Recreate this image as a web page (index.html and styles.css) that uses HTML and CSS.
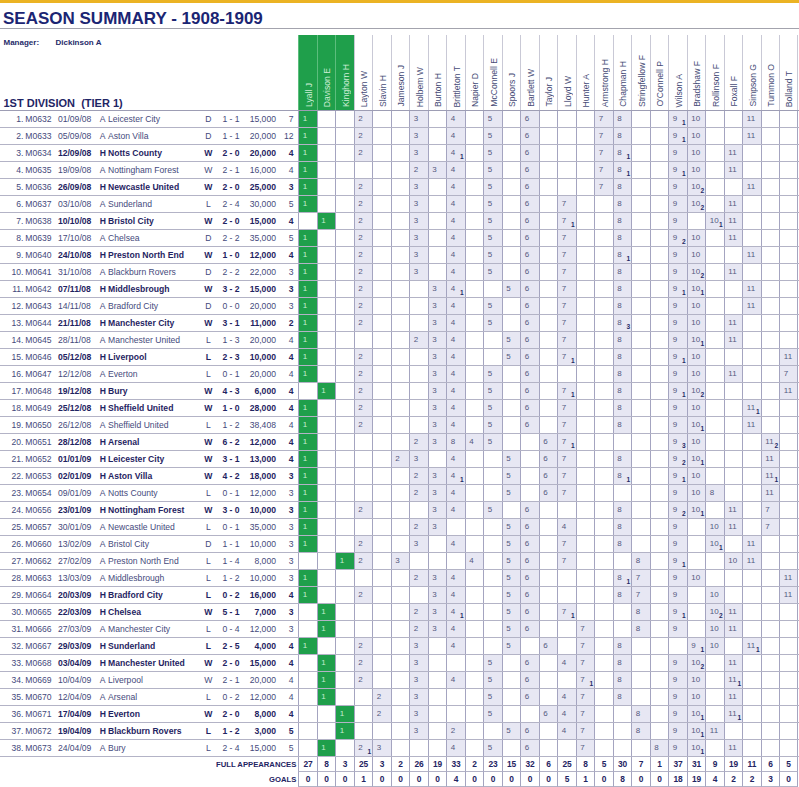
FILE: index.html
```html
<!DOCTYPE html>
<html lang="en">
<head>
<meta charset="utf-8">
<title>Season Summary 1908-1909</title>
<link rel="stylesheet" href="styles.css">
</head>
<body>
<div class="topbar"></div>
<h1 class="title">SEASON SUMMARY - 1908-1909</h1>
<div class="head">
  <div class="headinfo">
    <div class="manager"><span class="mlabel">Manager:</span><span class="mname">Dickinson A</span></div>
    <div class="division">1ST DIVISION  (TIER 1)</div>
  </div>
  <div class="players">
    <div class="hc gkh"><span>Lyall J</span></div>
    <div class="hc gkh"><span>Davison E</span></div>
    <div class="hc gkh"><span>Kinghorn H</span></div>
    <div class="hc"><span>Layton W</span></div>
    <div class="hc"><span>Slavin H</span></div>
    <div class="hc"><span>Jameson J</span></div>
    <div class="hc"><span>Holbem W</span></div>
    <div class="hc"><span>Burton H</span></div>
    <div class="hc"><span>Brittleton T</span></div>
    <div class="hc"><span>Napier D</span></div>
    <div class="hc"><span>McConnell E</span></div>
    <div class="hc"><span>Spoors J</span></div>
    <div class="hc"><span>Bartlett W</span></div>
    <div class="hc"><span>Taylor J</span></div>
    <div class="hc"><span>Lloyd W</span></div>
    <div class="hc"><span>Hunter A</span></div>
    <div class="hc"><span>Armstrong H</span></div>
    <div class="hc"><span>Chapman H</span></div>
    <div class="hc"><span>Stringfellow F</span></div>
    <div class="hc"><span>O'Connell P</span></div>
    <div class="hc"><span>Wilson A</span></div>
    <div class="hc"><span>Bradshaw F</span></div>
    <div class="hc"><span>Rollinson F</span></div>
    <div class="hc"><span>Foxall F</span></div>
    <div class="hc"><span>Simpson G</span></div>
    <div class="hc"><span>Tummon O</span></div>
    <div class="hc"><span>Bolland T</span></div>
  </div>
</div>
<div id="rows" class="rows"></div>
<div id="foot" class="foot"></div>
<script src="script.js"></script>
</body>
</html>
```

FILE: styles.css
```css
html, body {
  margin: 0;
  padding: 0;
  background: #ffffff;
}
body {
  width: 799px;
  font-family: "Liberation Sans", Arial, sans-serif;
  color: #2a2f6b;
  overflow: hidden;
}
.topbar {
  height: 3px;
  background: #ebb323;
}
.title {
  margin: 0;
  box-sizing: border-box;
  height: 26px;
  padding: 6.5px 0 0 3px;
  font-size: 17px;
  line-height: 17px;
  font-weight: bold;
  color: #1b2573;
  border-bottom: 1px solid #a3a3ad;
}
.head {
  display: flex;
  box-sizing: border-box;
  height: 82px;
  border-bottom: 1px solid #9d9db4;
}
.headinfo {
  width: 298.3px;
  flex: none;
  display: flex;
  flex-direction: column;
  justify-content: space-between;
  padding-top: 9px;
  box-sizing: border-box;
}
.manager {
  font-size: 8px;
  line-height: 10px;
  font-weight: bold;
  color: #262b6a;
  padding-left: 3.5px;
  display: flex;
}
.mlabel {
  width: 52px;
}
.division {
  font-size: 11px;
  line-height: 13px;
  font-weight: bold;
  color: #1f2565;
  padding-left: 3.5px;
  white-space: pre;
}
.players {
  display: flex;
  margin-top: 6px;
  height: 75px;
}
.hc {
  width: 18.5px;
  flex: none;
  box-sizing: border-box;
  border-left: 1px solid #c9c9d6;
  display: flex;
  flex-direction: column;
  justify-content: flex-end;
  align-items: center;
  padding: 0 0 3px 1.5px;
  font-size: 8.6px;
  color: #464b76;
}
.hc:last-child {
  border-right: 1px solid #c9c9d6;
}
.hc span {
  writing-mode: vertical-rl;
  transform: rotate(180deg);
  white-space: nowrap;
  line-height: 10px;
}
.hc.gkh {
  background: #1f9f4b;
  color: #cdeed6;
  border-left-color: #5cbd7d;
}
.rows {
  display: flex;
  flex-direction: column;
}
.row {
  display: flex;
  box-sizing: border-box;
  height: 17px;
  border-bottom: 1px solid #b3b3c6;
}
.info {
  width: 298.3px;
  flex: none;
  box-sizing: border-box;
  padding-right: 4.8px;
  display: grid;
  grid-template-columns: 23.5px 34px 41.3px 8.7px 92.5px 16.6px 28.8px 30.6px 17.5px;
  font-size: 8.6px;
  line-height: 16px;
  color: #454a7c;
  white-space: nowrap;
}
.idx { text-align: right; }
.code { padding-left: 1.8px; }
.date { padding-left: 0.4px; }
.ven { padding-left: 1px; }
.team { padding-left: 0.5px; overflow: hidden; }
.res { text-align: center; }
.score { text-align: center; }
.att { text-align: right; }
.pos { text-align: right; }
.home .date, .home .ven, .home .team, .home .res,
.home .score, .home .att, .home .pos {
  font-weight: bold;
  color: #1f2462;
}
.c {
  width: 18.5px;
  flex: none;
  box-sizing: border-box;
  border-left: 1px solid #a4a4c0;
  display: flex;
  justify-content: space-between;
  padding: 0 1.2px 0 3.5px;
  font-size: 8px;
  line-height: 16px;
  color: #545980;
}
.c:last-child {
  border-right: 1px solid #a4a4c0;
}
.c.on {
  background: #e7e7f3;
}
.c.gk {
  background: #1f9f4b;
  color: #c6ecd0;
}
.c b {
  align-self: flex-end;
  font-size: 6.6px;
  line-height: 8px;
  margin-bottom: 0.5px;
  color: #262b66;
}
.foot {
  display: flex;
  flex-direction: column;
}
.frow {
  display: flex;
  height: 15px;
}
.flabel {
  width: 298.3px;
  flex: none;
  box-sizing: border-box;
  padding-right: 2px;
  text-align: right;
  font-size: 7.7px;
  line-height: 15px;
  font-weight: bold;
  color: #1f2462;
}
.fc {
  width: 18.5px;
  flex: none;
  box-sizing: border-box;
  border-left: 1px solid #a4a4c0;
  border-bottom: 1px solid #b3b3c6;
  text-align: center;
  font-size: 8.4px;
  line-height: 14px;
  font-weight: bold;
  color: #1f2462;
}
.fc:last-child {
  border-right: 1px solid #a4a4c0;
}
```

FILE: script.js
```js
var matches = [
  ["M0632","01/09/08","A","Leicester City","D","1 - 1","15,000","7"],
  ["M0633","05/09/08","A","Aston Villa","D","1 - 1","20,000","12"],
  ["M0634","12/09/08","H","Notts County","W","2 - 0","20,000","4"],
  ["M0635","19/09/08","A","Nottingham Forest","W","2 - 1","16,000","4"],
  ["M0636","26/09/08","H","Newcastle United","W","2 - 0","25,000","3"],
  ["M0637","03/10/08","A","Sunderland","L","2 - 4","30,000","5"],
  ["M0638","10/10/08","H","Bristol City","W","2 - 0","15,000","4"],
  ["M0639","17/10/08","A","Chelsea","D","2 - 2","35,000","5"],
  ["M0640","24/10/08","H","Preston North End","W","1 - 0","12,000","4"],
  ["M0641","31/10/08","A","Blackburn Rovers","D","2 - 2","22,000","3"],
  ["M0642","07/11/08","H","Middlesbrough","W","3 - 2","15,000","3"],
  ["M0643","14/11/08","A","Bradford City","D","0 - 0","20,000","3"],
  ["M0644","21/11/08","H","Manchester City","W","3 - 1","11,000","2"],
  ["M0645","28/11/08","A","Manchester United","L","1 - 3","20,000","4"],
  ["M0646","05/12/08","H","Liverpool","L","2 - 3","10,000","4"],
  ["M0647","12/12/08","A","Everton","L","0 - 1","20,000","4"],
  ["M0648","19/12/08","H","Bury","W","4 - 3","6,000","4"],
  ["M0649","25/12/08","H","Sheffield United","W","1 - 0","28,000","4"],
  ["M0650","26/12/08","A","Sheffield United","L","1 - 2","38,408","4"],
  ["M0651","28/12/08","H","Arsenal","W","6 - 2","12,000","4"],
  ["M0652","01/01/09","H","Leicester City","W","3 - 1","13,000","4"],
  ["M0653","02/01/09","H","Aston Villa","W","4 - 2","18,000","3"],
  ["M0654","09/01/09","A","Notts County","L","0 - 1","12,000","3"],
  ["M0656","23/01/09","H","Nottingham Forest","W","3 - 0","10,000","3"],
  ["M0657","30/01/09","A","Newcastle United","L","0 - 1","35,000","3"],
  ["M0660","13/02/09","A","Bristol City","D","1 - 1","10,000","3"],
  ["M0662","27/02/09","A","Preston North End","L","1 - 4","8,000","3"],
  ["M0663","13/03/09","A","Middlesbrough","L","1 - 2","10,000","3"],
  ["M0664","20/03/09","H","Bradford City","L","0 - 2","16,000","4"],
  ["M0665","22/03/09","H","Chelsea","W","5 - 1","7,000","3"],
  ["M0666","27/03/09","A","Manchester City","L","0 - 4","12,000","3"],
  ["M0667","29/03/09","H","Sunderland","L","2 - 5","4,000","4"],
  ["M0668","03/04/09","H","Manchester United","W","2 - 0","15,000","4"],
  ["M0669","10/04/09","A","Liverpool","W","2 - 1","20,000","4"],
  ["M0670","12/04/09","A","Arsenal","L","0 - 2","12,000","4"],
  ["M0671","17/04/09","H","Everton","W","2 - 0","8,000","4"],
  ["M0672","19/04/09","H","Blackburn Rovers","L","1 - 2","3,000","5"],
  ["M0673","24/04/09","A","Bury","L","2 - 4","15,000","5"]
];

var lineups = [
  "0:1 3:2 6:3 8:4 10:5 12:6 16:7 17:8 20:9:1 21:10 24:11",
  "0:1 3:2 6:3 8:4 10:5 12:6 16:7 17:8 20:9:1 21:10 24:11",
  "0:1 3:2 6:3 8:4:1 10:5 12:6 16:7 17:8:1 20:9 21:10 23:11",
  "0:1 6:2 7:3 8:4 10:5 12:6 16:7 17:8:1 20:9:1 21:10 23:11",
  "0:1 3:2 6:3 8:4 10:5 12:6 16:7 17:8 20:9 21:10:2 24:11",
  "0:1 3:2 6:3 8:4 10:5 12:6 14:7 17:8 20:9 21:10:2 23:11",
  "1:1 3:2 6:3 8:4 10:5 12:6 14:7:1 17:8 20:9 22:10:1 23:11",
  "0:1 3:2 6:3 8:4 10:5 12:6 14:7 17:8 20:9:2 21:10 23:11",
  "0:1 3:2 6:3 8:4 10:5 12:6 14:7 17:8:1 20:9 21:10 24:11",
  "0:1 3:2 6:3 8:4 10:5 12:6 14:7 17:8 20:9 21:10:2 23:11",
  "0:1 3:2 7:3 8:4:1 11:5 12:6 14:7 17:8 20:9:1 21:10:1 24:11",
  "0:1 3:2 7:3 8:4 10:5 12:6 14:7 17:8 20:9 21:10 24:11",
  "0:1 3:2 7:3 8:4 10:5 12:6 14:7 17:8:3 20:9 21:10 23:11",
  "0:1 6:2 7:3 8:4 11:5 12:6 14:7 17:8 20:9 21:10:1 23:11",
  "0:1 3:2 7:3 8:4 11:5 12:6 14:7:1 17:8 20:9:1 21:10 26:11",
  "0:1 3:2 7:3 8:4 10:5 12:6 17:8 20:9 21:10 23:11 26:7",
  "1:1 3:2 7:3 8:4 10:5 12:6 14:7:1 17:8 20:9:1 21:10:2 26:11",
  "0:1 3:2 7:3 8:4 10:5 12:6 14:7 17:8 20:9 21:10 24:11:1",
  "0:1 3:2 7:3 8:4 10:5 12:6 14:7 17:8 20:9 21:10:1 24:11",
  "0:1 6:2 7:3 8:8 9:4 10:5 13:6 14:7:1 20:9:3 21:10 25:11:2",
  "0:1 5:2 6:3 8:4 11:5 13:6 14:7 17:8 20:9:2 21:10:1 25:11",
  "0:1 6:2 7:3 8:4:1 11:5 13:6 14:7 17:8:1 20:9:1 21:10 25:11:1",
  "0:1 6:2 7:3 8:4 11:5 13:6 14:7 20:9 21:10 22:8 25:11",
  "0:1 3:2 7:3 8:4 10:5 12:6 17:8 20:9:2 21:10:1 23:11 25:7",
  "0:1 6:2 7:3 11:5 12:6 14:4 17:8 20:9 22:10 23:11 25:7",
  "0:1 3:2 6:3 8:4 11:5 12:6 14:7 17:8 20:9 22:10:1 24:11",
  "2:1 3:2 5:3 9:4 11:5 12:6 14:7 18:8 20:9:1 23:10 24:11",
  "0:1 6:2 7:3 8:4 11:5 12:6 17:8:1 18:7 20:9 21:10 26:11",
  "0:1 3:2 7:3 8:4 11:5 12:6 17:8 18:7 20:9 22:10 26:11",
  "1:1 6:2 7:3 8:4:1 11:5 12:6 14:7:1 18:8 20:9:1 22:10:2 23:11",
  "1:1 6:2 7:3 8:4 11:5 12:6 15:7 18:8 20:9 22:10 23:11",
  "0:1 3:2 6:3 8:4 11:5 13:6 15:7 17:8 21:9:1 22:10 24:11:1",
  "1:1 3:2 6:3 10:5 12:6 14:4 15:7 17:8 20:9 21:10:2 23:11",
  "1:1 3:2 6:3 8:4 10:5 12:6 15:7:1 17:8 20:9 21:10 23:11:1",
  "1:1 4:2 6:3 10:5 12:6 14:4 15:7 17:8 20:9 21:10 23:11",
  "2:1 4:2 6:3 10:5 13:6 14:4 15:7 18:8 20:9 21:10:1 23:11:1",
  "2:1 6:3 8:2 11:5 12:6 14:4 15:7 18:8 20:9 21:10:1 22:11",
  "1:1 3:2:1 4:3 8:4 10:5 12:6 15:7 19:8 20:9 21:10:1 23:11"
];

var apps = "27 8 3 25 3 2 26 19 33 2 23 15 32 6 25 8 5 30 7 1 37 31 9 19 11 6 5".split(" ");
var goals = "0 0 0 1 0 0 0 0 4 0 0 0 0 0 5 1 0 8 0 0 18 19 4 2 2 3 0".split(" ");

var rowsEl = document.getElementById("rows");
var infoClasses = ["idx","code","date","ven","team","res","score","att","pos"];

matches.forEach(function (m, i) {
  var row = document.createElement("div");
  row.className = "row" + (m[2] === "H" ? " home" : "");
  var info = document.createElement("div");
  info.className = "info";
  var vals = [(i + 1) + "."].concat(m);
  vals.forEach(function (v, k) {
    var s = document.createElement("span");
    s.className = infoClasses[k];
    s.textContent = v;
    info.appendChild(s);
  });
  row.appendChild(info);
  var cells = {};
  lineups[i].split(" ").forEach(function (t) {
    var p = t.split(":");
    cells[p[0]] = { n: p[1], g: p[2] };
  });
  for (var c = 0; c < 27; c++) {
    var d = document.createElement("div");
    d.className = "c";
    var e = cells[c];
    if (e) {
      d.className += (c < 3 ? " gk" : " on");
      var a = document.createElement("span");
      a.textContent = e.n;
      d.appendChild(a);
      if (e.g) {
        var b = document.createElement("b");
        b.textContent = e.g;
        d.appendChild(b);
      }
    }
    row.appendChild(d);
  }
  rowsEl.appendChild(row);
});

var footEl = document.getElementById("foot");
[["FULL APPEARANCES", apps], ["GOALS", goals]].forEach(function (f) {
  var r = document.createElement("div");
  r.className = "frow";
  var l = document.createElement("div");
  l.className = "flabel";
  l.textContent = f[0];
  r.appendChild(l);
  f[1].forEach(function (v) {
    var c = document.createElement("div");
    c.className = "fc";
    c.textContent = v;
    r.appendChild(c);
  });
  footEl.appendChild(r);
});
```
